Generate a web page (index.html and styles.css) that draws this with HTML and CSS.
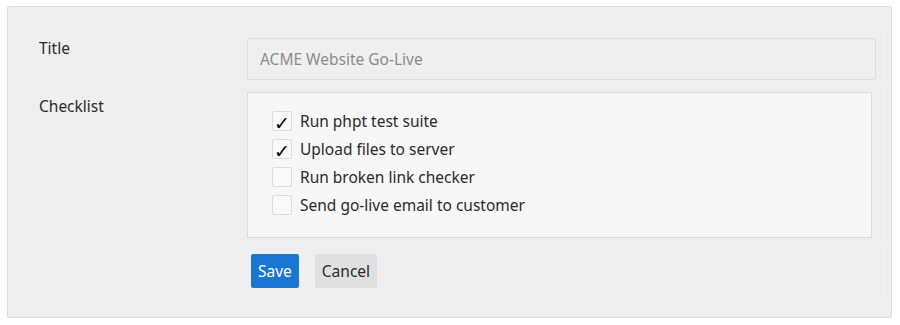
FILE: index.html
```html
<!DOCTYPE html>
<html lang="en">
<head>
  <meta charset="UTF-8" />
  <title>Checklist</title>
  <link rel="stylesheet" href="styles.css">
</head>
<body>
  <form class="panel">
    <div class="row row-title">
      <label class="label">Title</label>
      <input type="text" class="title-input" value="ACME Website Go-Live" readonly>
    </div>

    <div class="row row-checklist">
      <label class="label">Checklist</label>
      <div class="checklist">
        <div class="check-item">
          <span class="box checked">&#10003;</span>
          <span>Run phpt test suite</span>
        </div>
        <div class="check-item">
          <span class="box checked">&#10003;</span>
          <span>Upload files to server</span>
        </div>
        <div class="check-item">
          <span class="box"></span>
          <span>Run broken link checker</span>
        </div>
        <div class="check-item">
          <span class="box"></span>
          <span>Send go-live email to customer</span>
        </div>
      </div>
    </div>

    <div class="row row-actions">
      <div></div>
      <div class="actions">
        <button type="button" class="btn btn-save">Save</button>
        <button type="button" class="btn btn-cancel">Cancel</button>
      </div>
    </div>
  </form>
</body>
</html>
```

FILE: styles.css
```css
:root {
  --panel-bg: #efefef;
  --border: #dcdcdc;
  --row-border: #ebebeb;
  --box-bg: #f7f7f7;
  --text: #2b2b2b;
  --muted: #8c8c8c;
  --accent: #1976d2;
}

* {
  margin: 0;
  padding: 0;
  box-sizing: border-box;
}

body {
  background: #ffffff;
  color: var(--text);
  font-family: "Noto Sans", sans-serif;
  font-size: 15.5px;
  padding: 6px 0 0 7px;
}

.panel {
  width: 885px;
  height: 312px;
  background: var(--panel-bg);
  border: 1px solid var(--border);
  border-radius: 2px;
  padding: 24px 10px 0 14px;
  display: flex;
  flex-direction: column;
  gap: 3px;
}

.row {
  display: grid;
  grid-template-columns: 208px 1fr;
  border: 1px solid var(--row-border);
}

.label {
  line-height: 20px;
}

.row-title {
  height: 55px;
  padding: 6px 4px 0 16px;
}

.title-input {
  height: 42px;
  width: 100%;
  background: var(--panel-bg);
  border: 1px solid var(--border);
  border-radius: 2px;
  padding: 0 12px;
  font: inherit;
  color: var(--muted);
  outline: none;
}

.row-checklist {
  height: 151px;
  padding: 2px 8px 0 16px;
}

.row-checklist .label {
  padding-top: 4px;
}

.checklist {
  height: 146px;
  background: var(--box-bg);
  border: 1px solid var(--border);
  padding: 18px 24px;
  display: flex;
  flex-direction: column;
  gap: 8px;
}

.check-item {
  display: flex;
  align-items: center;
  gap: 8px;
  height: 20px;
}

.box {
  width: 20px;
  height: 20px;
  border: 1px solid var(--border);
  border-radius: 2px;
  background: #f9f9f9;
  display: flex;
  align-items: center;
  justify-content: center;
  font-family: "DejaVu Sans", sans-serif;
  font-size: 19px;
  line-height: 1;
  color: #000;
  padding-top: 5px;
}

.row-actions {
  height: 56px;
  padding: 10px 0 0 16px;
}

.actions {
  display: flex;
  gap: 16px;
  padding-left: 4px;
}

.btn {
  height: 34px;
  padding: 0 7px;
  border: none;
  border-radius: 2px;
  font: inherit;
  cursor: pointer;
}

.btn-save {
  background: var(--accent);
  color: #ffffff;
}

.btn-cancel {
  background: #e0e0e0;
  color: var(--text);
}
```
